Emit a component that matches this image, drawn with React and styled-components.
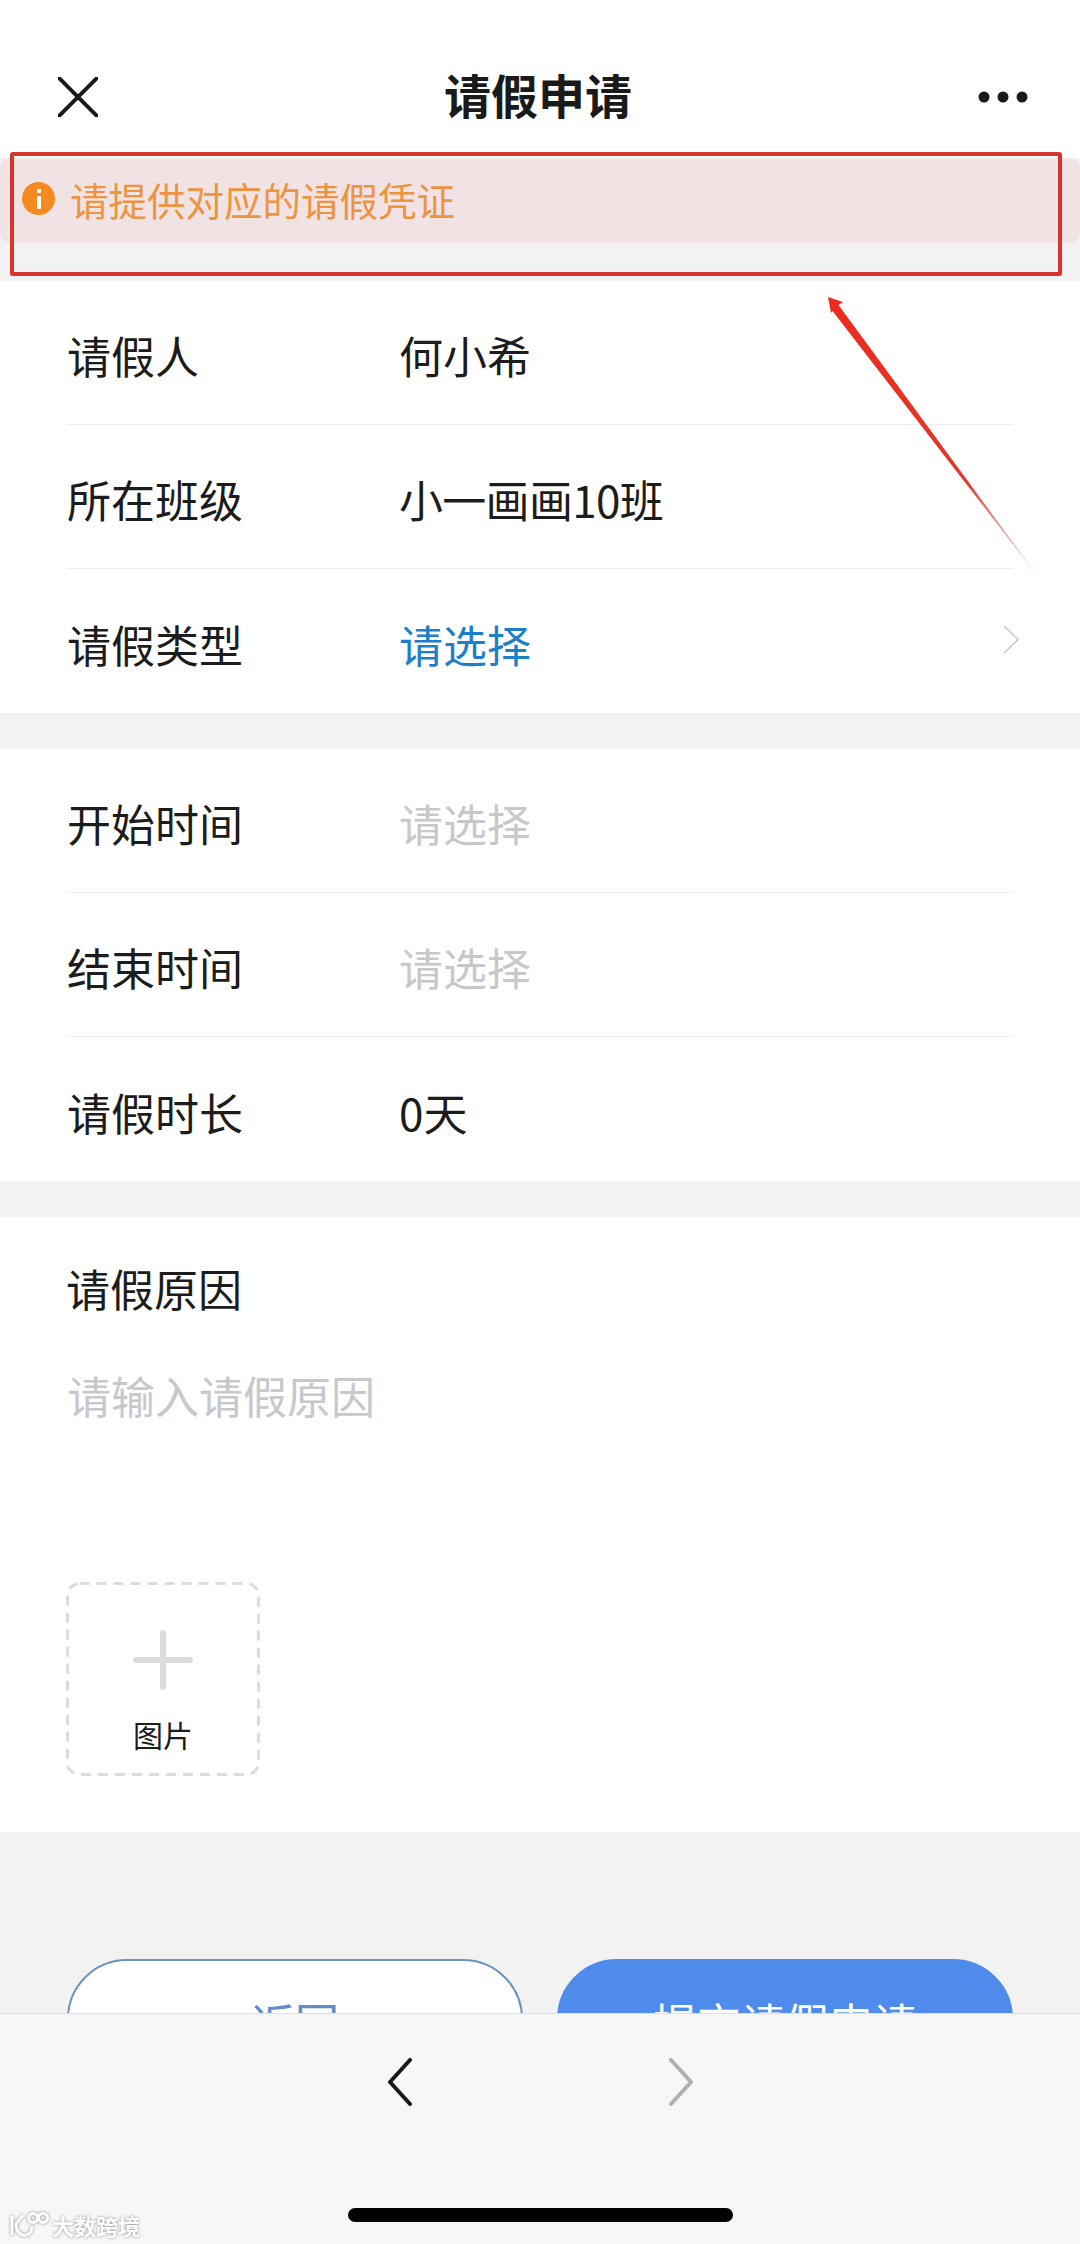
import React from "react";
import styled, { createGlobalStyle } from "styled-components";

const GlobalStyle = createGlobalStyle`
  html, body {
    margin: 0;
    padding: 0;
    background: #f2f2f2;
    font-family: "Noto Sans CJK SC", "Noto Sans", sans-serif;
  }
`;

const Page = styled.div`
  position: relative;
  width: 1080px;
  height: 2244px;
  overflow: hidden;
  background: #f2f2f2;
`;

const Header = styled.header`
  display: flex;
  align-items: center;
  justify-content: space-between;
  box-sizing: border-box;
  height: 158px;
  padding: 36px 52px 0 58px;
  background: #fff;
`;

const Title = styled.h1`
  margin: 0;
  padding-bottom: 6px;
  font-size: 47px;
  font-weight: 700;
  line-height: 60px;
  color: #1a1a1a;
`;

const Notice = styled.div`
  display: flex;
  align-items: center;
  gap: 15px;
  box-sizing: border-box;
  height: 85px;
  padding: 0 0 4px 22px;
  border-radius: 10px;
  background: #f1e3e3;
  color: #ee9340;
  font-size: 38.5px;
  line-height: 50px;
`;

const NoticeBadge = styled.span`
  display: flex;
  align-items: center;
  justify-content: center;
  width: 33px;
  height: 33px;
  border-radius: 50%;
  background: #f58a22;
`;

const Section = styled.section`
  margin-top: ${(p) => p.$gap}px;
  background: #fff;
`;

const Row = styled.div`
  position: relative;
  display: flex;
  align-items: center;
  box-sizing: border-box;
  height: 144px;
  margin: 0 67px;
  padding-top: 5px;
  border-bottom: ${(p) => (p.$last ? "none" : "1px solid #efefef")};
`;

const Label = styled.div`
  width: 332px;
  font-size: 44px;
  line-height: 60px;
  color: #1c1c1c;
`;

const Value = styled.div`
  font-size: 44px;
  line-height: 60px;
  letter-spacing: ${(p) => (p.$tight ? "-0.7px" : "0")};
  color: ${(p) => p.$color || "#1c1c1c"};
`;

const RowArrow = styled.svg`
  position: absolute;
  right: -6px;
  top: 56px;
  width: 16px;
  height: 30px;
`;

const ReasonBlock = styled.div`
  height: 615px;
  box-sizing: border-box;
  padding: 41px 66px 0;
`;

const Placeholder = styled.div`
  margin: 47px 0 0 1px;
  font-size: 44px;
  line-height: 60px;
  color: #c6c8cc;
`;

const Upload = styled.div`
  position: relative;
  display: flex;
  flex-direction: column;
  align-items: center;
  box-sizing: border-box;
  width: 194px;
  height: 194px;
  margin-top: 157px;
  padding-top: 48px;
`;

const DashedFrame = styled.svg`
  position: absolute;
  inset: 0;
  width: 194px;
  height: 194px;
`;

const UploadText = styled.div`
  margin-top: 23px;
  font-size: 30px;
  line-height: 42px;
  color: #1c1c1c;
`;

const Actions = styled.div`
  display: flex;
  gap: 34px;
  padding: 127px 67px 0;
`;

const ActionButton = styled.button`
  flex: 1;
  height: 126px;
  padding: 0;
  border: 2px solid ${(p) => (p.$primary ? "#4f8bea" : "#6a93c4")};
  border-radius: 60px;
  background: ${(p) => (p.$primary ? "#4f8bea" : "#fff")};
  color: ${(p) => (p.$primary ? "#fff" : "#5f8fc4")};
  font-family: inherit;
  font-size: 44px;
`;

const BottomBar = styled.div`
  position: absolute;
  left: 0;
  right: 0;
  bottom: 0;
  height: 230px;
  background: #f7f7f7;
  border-top: 1px solid #e0e0e0;
`;

const NavButtons = styled.div`
  display: flex;
  justify-content: center;
  gap: 257px;
  padding-top: 44px;
`;

const HomeBar = styled.div`
  position: absolute;
  left: 348px;
  bottom: 22px;
  width: 385px;
  height: 14px;
  border-radius: 7px;
  background: #000;
`;

const Watermark = styled.div`
  position: absolute;
  left: 9px;
  bottom: 4px;
  display: flex;
  align-items: center;
  gap: 3px;
  color: #fff;
  font-size: 22px;
  font-weight: 700;
  line-height: 30px;
  text-shadow: 0 0 3px #8a8a8a;
`;

const WatermarkLogo = styled.svg`
  width: 40px;
  height: 30px;
  filter: drop-shadow(0 0 1.5px #8a8a8a);
`;

const RedBox = styled.div`
  position: absolute;
  left: 10px;
  top: 152px;
  width: 1052px;
  height: 124px;
  box-sizing: border-box;
  border: 4px solid #d5352c;
  border-radius: 3px;
`;

const RedArrow = styled.svg`
  position: absolute;
  left: 820px;
  top: 290px;
  width: 230px;
  height: 300px;
`;

function InfoRow({ label, value, color, last, arrow, tight }) {
  return (
    <Row $last={last}>
      <Label>{label}</Label>
      <Value $color={color} $tight={tight}>{value}</Value>
      {arrow && (
        <RowArrow viewBox="0 0 16 30" fill="none">
          <path d="M1 1l14 13.500L1 28" stroke="#c8c8c8" strokeWidth="1.500" />
        </RowArrow>
      )}
    </Row>
  );
}

export default function App() {
  return (
    <Page>
      <GlobalStyle />
      <Header>
        <svg width="40" height="40" viewBox="0 0 40 40" fill="none">
          <path d="M1 1l38 38M39 1L1 39" stroke="#1a1a1a" strokeWidth="4" strokeLinecap="round" />
        </svg>
        <Title>请假申请</Title>
        <svg width="50" height="12" viewBox="0 0 50 12" fill="#1a1a1a">
          <circle cx="6" cy="6" r="5.500" />
          <circle cx="25" cy="6" r="5.500" />
          <circle cx="44" cy="6" r="5.500" />
        </svg>
      </Header>

      <Notice>
        <NoticeBadge>
          <svg width="8" height="20" viewBox="0 0 8 20" fill="#fff">
            <rect x="2" y="0" width="4" height="4" rx="1" />
            <rect x="2" y="7" width="4" height="13" rx="1" />
          </svg>
        </NoticeBadge>
        请提供对应的请假凭证
      </Notice>

      <Section $gap={38}>
        <InfoRow label="请假人" value="何小希" />
        <InfoRow label="所在班级" value="小一画画10班" tight />
        <InfoRow label="请假类型" value="请选择" color="#1d7fc9" last arrow />
      </Section>

      <Section $gap={36}>
        <InfoRow label="开始时间" value="请选择" color="#c6c8cc" />
        <InfoRow label="结束时间" value="请选择" color="#c6c8cc" />
        <InfoRow label="请假时长" value="0天" last />
      </Section>

      <Section $gap={36}>
        <ReasonBlock>
          <Label>请假原因</Label>
          <Placeholder>请输入请假原因</Placeholder>
          <Upload>
            <DashedFrame viewBox="0 0 194 194" fill="none">
              <rect x="1.500" y="1.500" width="191" height="191" rx="12" stroke="#dcdcdc" strokeWidth="3" strokeDasharray="10 7" />
            </DashedFrame>
            <svg width="60" height="60" viewBox="0 0 60 60" fill="#dcdcdc">
              <rect x="0" y="27" width="60" height="6" rx="3" />
              <rect x="27" y="0" width="6" height="60" rx="3" />
            </svg>
            <UploadText>图片</UploadText>
          </Upload>
        </ReasonBlock>
      </Section>

      <Actions>
        <ActionButton>返回</ActionButton>
        <ActionButton $primary>提交请假申请</ActionButton>
      </Actions>

      <BottomBar>
        <NavButtons>
          <svg width="24" height="48" viewBox="0 0 24 48" fill="none">
            <path d="M22 2L2 24l20 22" stroke="#1a1a1a" strokeWidth="4" strokeLinecap="round" strokeLinejoin="round" />
          </svg>
          <svg width="24" height="48" viewBox="0 0 24 48" fill="none">
            <path d="M2 2l20 22L2 46" stroke="#b0b0b0" strokeWidth="4" strokeLinecap="round" strokeLinejoin="round" />
          </svg>
        </NavButtons>
        <HomeBar />
        <Watermark>
          <WatermarkLogo viewBox="0 0 40 30" fill="none" stroke="#fff" strokeWidth="3">
            <path d="M3 6v19M14 5L7 14c0 8 5 12 10 11 4-1 6-4 6-8" />
            <circle cx="24" cy="8" r="4.500" />
            <circle cx="34" cy="8" r="4.500" />
          </WatermarkLogo>
          大数跨境
        </Watermark>
      </BottomBar>

      <RedBox />
      <RedArrow viewBox="0 0 230 300">
        <defs>
          <linearGradient id="arrowFade" x1="8" y1="7" x2="222" y2="292" gradientUnits="userSpaceOnUse">
            <stop offset="0" stopColor="#ee2a1c" />
            <stop offset="0.65" stopColor="#e0392c" />
            <stop offset="1" stopColor="#c8a0a0" stopOpacity="0.25" />
          </linearGradient>
        </defs>
        <path d="M8 7l15 5-4.500 3L222 292 12.500 21 11 23z" fill="url(#arrowFade)" />
      </RedArrow>
    </Page>
  );
}
